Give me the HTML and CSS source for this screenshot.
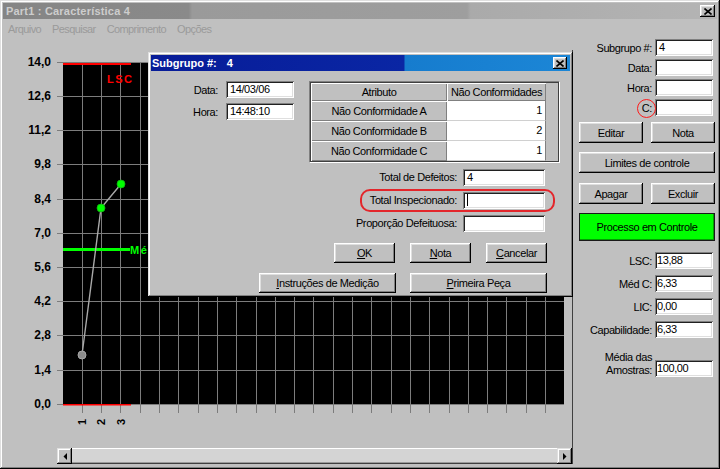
FILE: index.html
```html
<!DOCTYPE html>
<html lang="pt">
<head>
<meta charset="utf-8">
<title>Part1 : Característica 4</title>
<link rel="stylesheet" href="styles.css">
</head>
<body>
<div class="window">
  <div class="titlebar">
    <span class="title">Part1 : Característica 4</span>
    <span class="tbtn"><svg width="8" height="7" viewBox="0 0 8 7"><path d="M0.5 0.5L7.5 6.5M7.5 0.5L0.5 6.5" stroke="#000" stroke-width="1.6" fill="none"/></svg></span>
  </div>
  <div class="menubar">
    <span class="menu">Arquivo</span>
    <span class="menu">Pesquisar</span>
    <span class="menu">Comprimento</span>
    <span class="menu">Opções</span>
  </div>
  <div class="main">
    <div class="chartpanel">
      <svg class="chart" width="569" height="398" viewBox="3 50 569 398">
        <rect x="63" y="62" width="501" height="343" fill="#000"/>
        <path class="grid" d="M57 62.5H564M57 96.5H564M57 130.5H564M57 164.5H564M57 199.5H564M57 233.5H564M57 267.5H564M57 301.5H564M57 335.5H564M57 370.5H564M57 404.5H564"/>
        <path class="grid" d="M82.5 62V413M101.5 62V413M120.5 62V413M140.5 62V413M159.5 62V413M178.5 62V413M198.5 62V413M217.5 62V413M236.5 62V413M256.5 62V413M275.5 62V413M294.5 62V413M313.5 62V413M333.5 62V413M352.5 62V413M371.5 62V413M391.5 62V413M410.5 62V413M429.5 62V413M449.5 62V413M468.5 62V413M487.5 62V413M506.5 62V413M526.5 62V413M545.5 62V413"/>
        <rect x="63" y="63" width="68" height="2" fill="#ff0000"/>
        <rect x="63" y="404" width="68" height="1.5" fill="#ff0000"/>
        <rect x="63" y="248" width="67" height="3" fill="#00ff00"/>
        <text class="lim red" x="107" y="83">LSC</text>
        <text class="lim green" x="130" y="254">Méd C</text>
        <polyline points="82,355 101,208 121,184" fill="none" stroke="#a9a9a9" stroke-width="1.4"/>
        <circle cx="82" cy="355" r="4" fill="#8c8c8c" stroke="#a6a6a6" stroke-width="1"/>
        <circle cx="101" cy="208" r="4" fill="#00ff00" stroke="#10b010" stroke-width="0.8"/>
        <circle cx="121" cy="184" r="4" fill="#00ff00" stroke="#10b010" stroke-width="0.8"/>
        <g class="ylab">
          <text x="51" y="66">14,0</text>
          <text x="51" y="100">12,6</text>
          <text x="51" y="134">11,2</text>
          <text x="51" y="168">9,8</text>
          <text x="51" y="203">8,4</text>
          <text x="51" y="237">7,0</text>
          <text x="51" y="271">5,6</text>
          <text x="51" y="305">4,2</text>
          <text x="51" y="339">2,8</text>
          <text x="51" y="374">1,4</text>
          <text x="51" y="408">0,0</text>
        </g>
        <g class="xlab">
          <text transform="translate(86,422) rotate(-90)">1</text>
          <text transform="translate(105,422) rotate(-90)">2</text>
          <text transform="translate(124.5,422) rotate(-90)">3</text>
        </g>
      </svg>
      <div class="hscroll">
        <span class="sbtn"><svg width="4" height="7" viewBox="0 0 4 7"><path d="M4 0V7L0.5 3.5Z" fill="#000"/></svg></span>
        <span class="thumb"></span>
        <span class="sbtn"><svg width="4" height="7" viewBox="0 0 4 7"><path d="M0 0V7L3.5 3.5Z" fill="#000"/></svg></span>
      </div>
    </div>
    <div class="side">
      <div class="field"><label>Subgrupo #:</label><span class="input">4</span></div>
      <div class="field"><label>Data:</label><span class="input"></span></div>
      <div class="field"><label>Hora:</label><span class="input"></span></div>
      <div class="field"><label>C:</label><span class="input"></span></div>
      <div class="btnrow first"><span class="btn half">Editar</span><span class="btn half">Nota</span></div>
      <div class="btn wide">Limites de controle</div>
      <div class="btnrow third"><span class="btn half">Apagar</span><span class="btn half">Excluir</span></div>
      <div class="status">Processo em Controle</div>
      <div class="field stat firststat"><label>LSC:</label><span class="input tight">13,88</span></div>
      <div class="field stat"><label>Méd C:</label><span class="input tight">6,33</span></div>
      <div class="field stat"><label>LIC:</label><span class="input tight">0,00</span></div>
      <div class="field stat"><label>Capabilidade:</label><span class="input tight">6,33</span></div>
      <div class="field stat media"><label class="two">Média das<br>Amostras:</label><span class="input tight">100,00</span></div>
    </div>
  </div>

  <div class="dialog">
    <div class="dtitle">
      <span class="dname">Subgrupo #:<span class="dnum">4</span></span>
      <span class="tbtn small"><svg width="8" height="7" viewBox="0 0 8 7"><path d="M0.5 0.5L7.5 6.5M7.5 0.5L0.5 6.5" stroke="#000" stroke-width="1.6" fill="none"/></svg></span>
    </div>
    <div class="dbody">
      <div class="dtop">
        <div class="dtime">
          <div class="drow"><label>Data:</label><span class="input w68">14/03/06</span></div>
          <div class="drow"><label>Hora:</label><span class="input w68">14:48:10</span></div>
        </div>
        <div class="gridbox">
          <div class="gtable">
            <div class="fx">Atributo</div><div class="fx">Não Conformidades</div><div class="pad"></div>
            <div class="fx">Não Conformidade A</div><div class="val">1</div><div class="pad"></div>
            <div class="fx">Não Conformidade B</div><div class="val">2</div><div class="pad"></div>
            <div class="fx">Não Conformidade C</div><div class="val">1</div><div class="pad"></div>
          </div>
        </div>
      </div>
      <div class="dform">
        <div class="frow"><label>Total de Defeitos:</label><span class="input w82">4</span></div>
        <div class="frow"><label>Total Inspecionado:</label><span class="input w82"><span class="caret"></span></span></div>
        <div class="frow"><label>Proporção Defeituosa:</label><span class="input w82"></span></div>
      </div>
      <div class="dbtns one">
        <span class="btn b61"><u>O</u>K</span>
        <span class="btn b61"><u>N</u>ota</span>
        <span class="btn b61"><u>C</u>ancelar</span>
      </div>
      <div class="dbtns two">
        <span class="btn b137"><u>I</u>nstruções de Medição</span>
        <span class="btn b137"><u>P</u>rimeira Peça</span>
      </div>
    </div>
    <span class="ring-box"></span>
  </div>
  <span class="ring-c"></span>
</div>
</body>
</html>
```
FILE: styles.css
```css
* { box-sizing: border-box; }
html, body { margin: 0; padding: 0; }
body {
  width: 720px;
  height: 469px;
  overflow: hidden;
  background: #c0c0c0;
  font-family: "Liberation Sans", Arial, sans-serif;
  font-size: 11px;
  letter-spacing: -0.4px;
  color: #000;
}
label { display: block; }

.window {
  position: relative;
  width: 720px;
  height: 469px;
  padding: 3px;
  background: #c0c0c0;
  box-shadow: inset -1px -1px #000, inset 1px 1px #dfdfdf, inset -2px -2px #808080, inset 2px 2px #fff;
  display: flex;
  flex-direction: column;
}

.titlebar {
  height: 16px;
  display: flex;
  align-items: center;
  justify-content: space-between;
  padding: 0 2px 0 3px;
  background: linear-gradient(90deg, #858585 0%, #8a8a8a 26%, #9a9a9a 26.5%, #9e9e9e 65%, #aaaaaa 65.5%, #b4b4b4 100%);
}
.title { color: #cdcdcd; font-weight: bold; letter-spacing: 0.2px; }
.tbtn {
  width: 15px;
  height: 12px;
  background: #c0c0c0;
  box-shadow: inset -1px -1px #000, inset 1px 1px #fff, inset -2px -2px #808080, inset 2px 2px #dfdfdf;
  display: flex;
  align-items: center;
  justify-content: center;
}
.tbtn svg { display: block; }
.tbtn.small { width: 14px; height: 12px; }

.menubar { height: 19px; display: flex; align-items: center; }
.menu { padding: 0 6px 0 5px; color: #9a9a9a; letter-spacing: -0.6px; }

.main { flex: 1; display: flex; min-height: 0; }

.chartpanel {
  width: 570px;
  height: 414px;
  margin-top: 12px;
  border-right: 1px solid #404040;
  display: flex;
  flex-direction: column;
}
.chart { display: block; }
.chart .grid { stroke: #7c7c7c; stroke-width: 1; fill: none; }
.chart .ylab text { font: bold 12px "Liberation Sans", Arial, sans-serif; letter-spacing: 0; text-anchor: end; fill: #000; }
.chart .xlab text { font: bold 11px "Liberation Sans", Arial, sans-serif; letter-spacing: 0; text-anchor: middle; fill: #000; }
.chart .lim { font: bold 11px "Liberation Sans", Arial, sans-serif; letter-spacing: 1.5px; }
.chart .red { fill: #ff0000; }
.chart .green { fill: #00ff00; }

.hscroll { margin-left: 54px; width: 515px; height: 16px; display: flex; }
.sbtn {
  width: 15px;
  height: 16px;
  background: #c0c0c0;
  box-shadow: inset -1px -1px #000, inset 1px 1px #dfdfdf, inset -2px -2px #808080, inset 2px 2px #fff;
  display: flex;
  align-items: center;
  justify-content: center;
}
.sbtn svg { display: block; }
.thumb {
  flex: 1;
  background: #d4d4d4;
  box-shadow: inset 0 -1px #404040, inset 0 1px #fff, inset 0 -2px #9a9a9a;
}

.side { width: 144px; padding: 1px 2px 0 6px; display: flex; flex-direction: column; }
.field { display: flex; align-items: center; height: 17px; margin-bottom: 3px; }
.field label { flex: 1; text-align: right; padding-right: 3px; white-space: nowrap; }
.input {
  display: block;
  height: 17px;
  width: 58px;
  margin-right: 2px;
  background: #fff;
  padding: 2px 3px 0 4px;
  line-height: 13px;
  white-space: nowrap;
  box-shadow: inset 1px 1px #808080, inset -1px -1px #fff, inset 2px 2px #202020, inset -2px -2px #dfdfdf;
}
.input.tight { padding-left: 2px; }

.btn {
  display: flex;
  align-items: center;
  justify-content: center;
  height: 21px;
  background: #c0c0c0;
  white-space: nowrap;
  box-shadow: inset -1px -1px #000, inset 1px 1px #fff, inset -2px -2px #808080, inset 2px 2px #dfdfdf;
}
.btnrow { display: flex; justify-content: space-between; width: 136px; }
.btnrow.first { margin-top: 3px; }
.btnrow.third { margin-top: 10px; }
.btn.half { width: 64px; }
.btn.wide { width: 136px; margin-top: 9px; }
.status {
  margin-top: 9px;
  width: 136px;
  height: 28px;
  background: #00ff00;
  border: 1px solid #1a1a1a;
  box-shadow: inset -1px -1px #00a000;
  display: flex;
  align-items: center;
  justify-content: center;
}
.field.stat { margin-bottom: 6px; }
.field.firststat { margin-top: 11px; }
.field.media { margin-top: 7px; height: 26px; align-items: flex-end; }
.field label.two { line-height: 13px; }

.dialog {
  position: absolute;
  left: 148px;
  top: 52px;
  width: 425px;
  height: 245px;
  padding: 3px;
  background: #c0c0c0;
  box-shadow: inset -1px -1px #000, inset 1px 1px #dfdfdf, inset -2px -2px #808080, inset 2px 2px #fff;
}
.dtitle {
  height: 16px;
  display: flex;
  align-items: center;
  justify-content: space-between;
  padding: 0 3px 0 1px;
  color: #fff;
  font-weight: bold;
  letter-spacing: 0;
  background: linear-gradient(90deg, #071c98 0%, #0a26a4 60.4%, #167cce 60.6%, #1c86d6 100%);
}
.dnum { margin-left: 10px; }
.dbody { padding-top: 10px; }
.dtop { display: flex; height: 82px; }
.dtime { width: 143px; display: flex; flex-direction: column; gap: 5px; }
.drow { display: flex; align-items: center; height: 17px; }
.drow label { width: 67px; text-align: right; }
.input.w68 { width: 68px; margin-left: 8px; margin-right: 0; }
.gridbox {
  margin-left: 15px;
  width: 251px;
  height: 82px;
  border: 1px solid;
  border-color: #808080 #fff #fff #808080;
}
.gtable {
  height: 80px;
  border: 1px solid #404040;
  display: grid;
  grid-template-columns: 136px 99px 1fr;
  grid-template-rows: 18px 20px 20px 20px;
  background: #c0c0c0;
}
.fx {
  display: flex;
  align-items: center;
  justify-content: center;
  white-space: nowrap;
  background: #c0c0c0;
  box-shadow: inset 1px 1px #fff, inset -1px -1px #808080;
}
.val {
  background: #fff;
  border-right: 1px solid #808080;
  border-bottom: 1px solid #d0d0d0;
  text-align: right;
  padding: 3px 3px 0 0;
}
.pad { background: #c0c0c0; }

.dform {
  margin-top: 6px;
  display: flex;
  flex-direction: column;
  align-items: flex-end;
  gap: 6px;
  padding-right: 25px;
}
.frow { display: flex; align-items: center; height: 17px; }
.frow label { padding-right: 6px; margin-top: -2px; }
.input.w82 { width: 82px; margin-right: 0; }
.caret { display: block; width: 1px; height: 12px; margin-top: 0; background: #000; }

.dbtns { display: flex; justify-content: flex-end; padding-right: 23px; }
.dbtns.one { margin-top: 11px; gap: 15px; }
.dbtns.two { margin-top: 10px; gap: 14px; }
.btn.b61 { width: 61px; height: 20px; }
.btn.b137 { width: 137px; height: 20px; }

.ring-box {
  position: absolute;
  left: 212px;
  top: 137px;
  width: 195px;
  height: 23px;
  border: 2px solid #e3262b;
  border-radius: 10px;
}
.ring-c {
  position: absolute;
  left: 637px;
  top: 99px;
  width: 19px;
  height: 19px;
  border: 1px solid #ff1a1a;
  border-radius: 50%;
}
```
